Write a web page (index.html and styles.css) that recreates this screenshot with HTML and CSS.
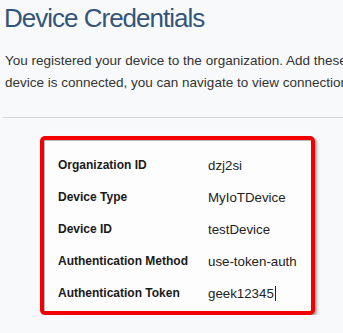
FILE: index.html
```
<!DOCTYPE html>
<html lang="en">
<head>
  <meta charset="UTF-8" />
  <meta name="viewport" content="width=device-width, initial-scale=1.0" />
  <title>Device Credentials</title>
  <link rel="stylesheet" href="styles.css">
</head>
<body>
  <main class="page">
    <h1 class="title">Device Credentials</h1>
    <p class="intro">
      You registered your device to the organization. Add these credentials to the configuration of your device to connect it to the platform. After the<br>
      device is connected, you can navigate to view connection and event logs pertaining to your device.
    </p>

    <hr class="divider">

    <section class="creds">
      <div class="row">
        <span class="label">Organization ID</span>
        <span class="value">dzj2si</span>
      </div>
      <div class="row">
        <span class="label">Device Type</span>
        <span class="value">MyIoTDevice</span>
      </div>
      <div class="row">
        <span class="label">Device ID</span>
        <span class="value">testDevice</span>
      </div>
      <div class="row">
        <span class="label">Authentication Method</span>
        <span class="value">use-token-auth</span>
      </div>
      <div class="row">
        <span class="label">Authentication Token</span>
        <span class="value">geek12345<span class="caret"></span></span>
      </div>
    </section>
  </main>
</body>
</html>
```

FILE: styles.css
```
html, body {
  margin: 0;
  padding: 0;
  overflow: hidden;
}

body {
  font-family: "Liberation Sans", Arial, sans-serif;
  background-color: #f8f9fa;
  color: #333;
}

.page {
  width: 1000px;
  padding: 2px 0 0 4px;
}

.title {
  margin: 0;
  font-size: 26px;
  font-weight: normal;
  letter-spacing: -1px;
  line-height: 32px;
  color: #34557a;
}

.intro {
  margin: 16px 0 0 1px;
  font-size: 13.5px;
  line-height: 22px;
  white-space: nowrap;
  color: #333;
}

.divider {
  width: 340px;
  margin: 23px 0 0 -1px;
  border: none;
  border-top: 1px solid #d4d6d8;
}

.creds {
  width: 253px;
  margin: 18px 0 0 36px;
  padding: 9px 0 2px 14px;
  background-color: #fdfdfd;
  border: 4px solid #f20000;
  border-radius: 5px;
  box-shadow: 2px 2px 3px rgba(0, 0, 0, 0.35), inset 1px 1px 0 #bbb;
}

.row {
  display: flex;
  align-items: center;
  height: 32px;
}

.label {
  width: 150px;
  font-size: 12px;
  font-weight: bold;
  color: #1a1a1a;
}

.value {
  font-size: 13.3px;
  color: #222;
}

.caret {
  display: inline-block;
  width: 1px;
  height: 15px;
  margin-left: 1px;
  vertical-align: -3px;
  background-color: #222;
}
```
